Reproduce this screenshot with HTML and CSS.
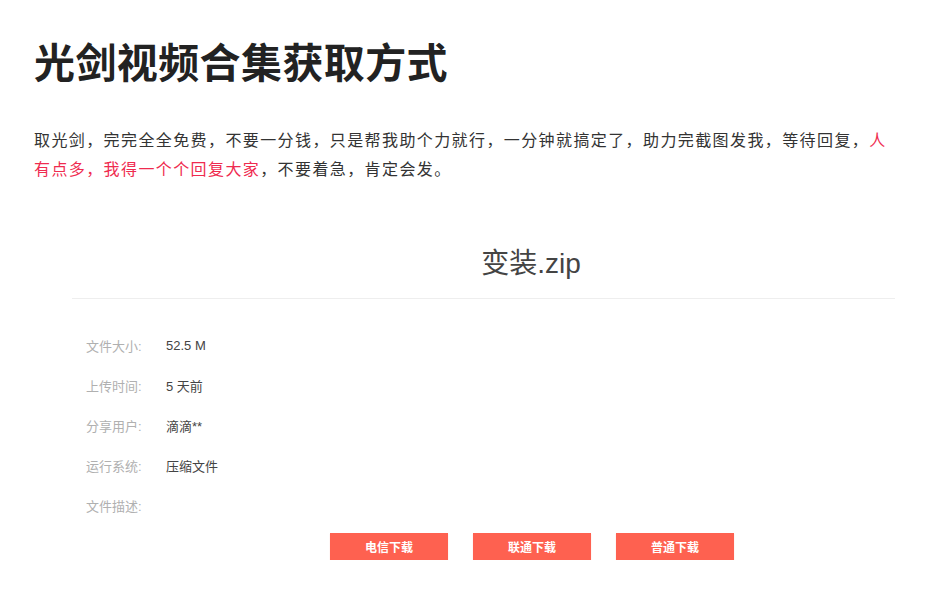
FILE: index.html
```html
<!DOCTYPE html>
<html lang="zh-CN">
<head>
<meta charset="utf-8">
<title>光剑视频合集获取方式</title>
<link rel="stylesheet" href="styles.css">
</head>
<body>
<div class="page">
  <h1 class="title">光剑视频合集获取方式</h1>
  <p class="intro">取光剑，完完全全免费，不要一分钱，只是帮我助个力就行，一分钟就搞定了，助力完截图发我，等待回复，<span class="red">人</span><span class="red">有点多，我得一个个回复大家</span>，不要着急，肯定会发。</p>
  <div class="card">
    <div class="file-name">变装.zip</div>
    <div class="info">
      <div class="row"><span class="label">文件大小:</span><span class="value">52.5 M</span></div>
      <div class="row"><span class="label">上传时间:</span><span class="value">5 天前</span></div>
      <div class="row"><span class="label">分享用户:</span><span class="value">滴滴**</span></div>
      <div class="row"><span class="label">运行系统:</span><span class="value">压缩文件</span></div>
      <div class="row"><span class="label">文件描述:</span><span class="value"></span></div>
    </div>
    <div class="buttons">
      <a class="btn">电信下载</a>
      <a class="btn">联通下载</a>
      <a class="btn">普通下载</a>
    </div>
  </div>
</div>
</body>
</html>
```
FILE: styles.css
```css
html, body {
  margin: 0;
  padding: 0;
  background: #fff;
}
body {
  font-family: "Liberation Sans", "Noto Sans CJK SC", sans-serif;
  color: #333;
}
.page {
  padding: 0 34px;
  width: 860px;
}
.title {
  margin: 36px 0 0;
  font-family: "Noto Sans CJK SC", sans-serif;
  font-size: 41px;
  line-height: 49px;
  font-weight: 700;
  color: #222;
  letter-spacing: 0.4px;
}
.intro {
  margin: 40px 0 0;
  font-family: "Noto Sans CJK SC", sans-serif;
  font-size: 16px;
  line-height: 29px;
  letter-spacing: 1.4px;
  color: #333;
}
.red {
  color: #ef2b4f;
}
.card {
  margin: 61px 0 0 38px;
  width: 823px;
}
.file-name {
  font-family: "Liberation Sans", "Noto Sans CJK SC", sans-serif;
  font-size: 28px;
  line-height: 40px;
  color: #444;
  text-align: center;
  padding-left: 95px;
  padding-bottom: 14px;
  border-bottom: 1px solid #eeeeee;
}
.info {
  margin-top: 26px;
  padding-left: 14px;
}
.row {
  display: flex;
  align-items: center;
  height: 40px;
  font-size: 13px;
}
.label {
  width: 80px;
  color: #b0b0b0;
}
.value {
  color: #444;
}
.buttons {
  display: flex;
  justify-content: center;
  gap: 25px;
  padding-left: 97px;
  margin-top: 8px;
}
.btn {
  display: flex;
  align-items: center;
  justify-content: center;
  width: 118px;
  height: 27px;
  background: #fe6150;
  color: #fff;
  font-size: 12px;
  font-weight: 700;
  box-shadow: 0 1px 1px rgba(255, 120, 100, 0.35);
}
```
